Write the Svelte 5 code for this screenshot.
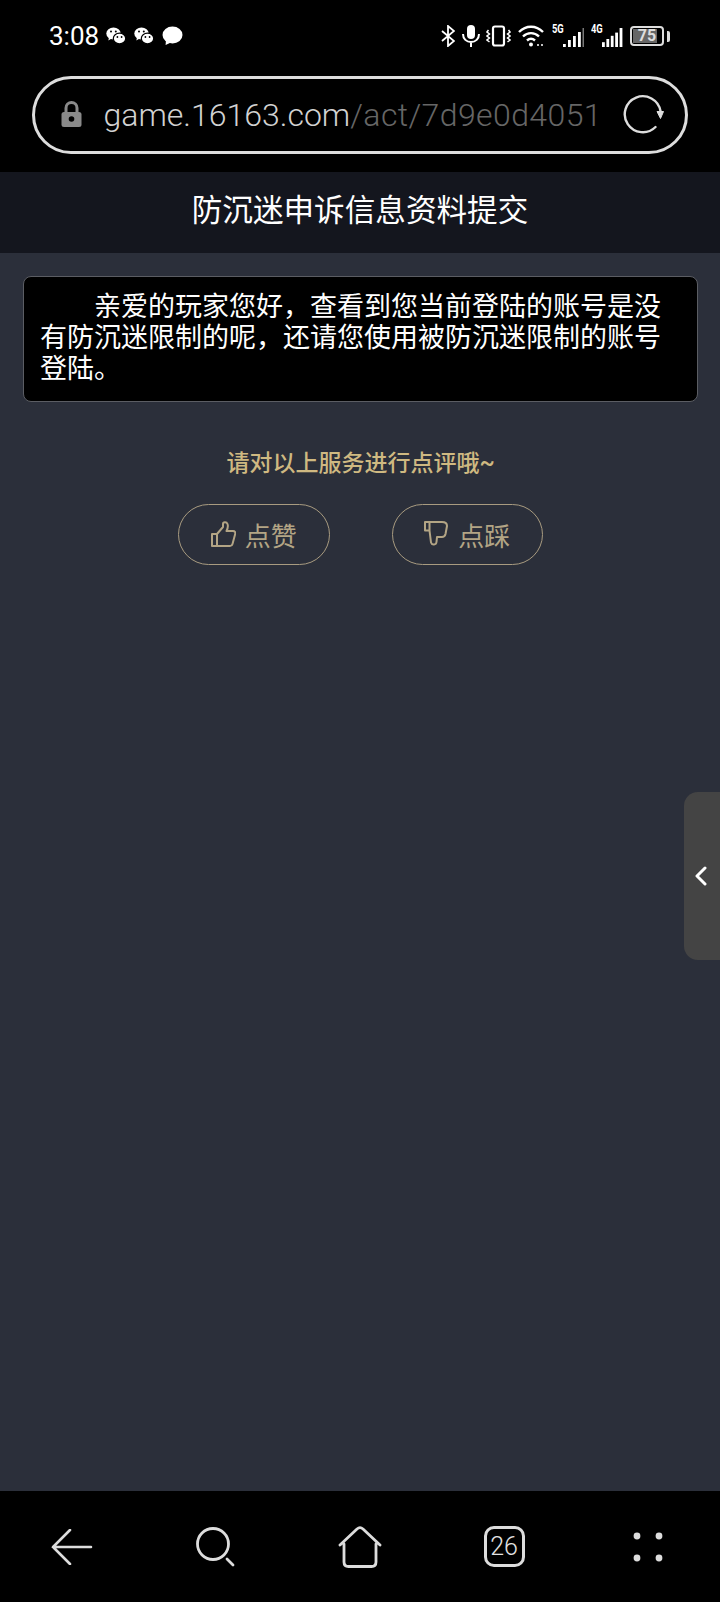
<script>
  const barsFive = [6, 10, 14, 18, 24];
  const navDots = [[4, 4], [26, 4], [4, 26], [26, 26]];
</script>

<div class="page">
  <div class="top">
    <div class="status">
      <div class="status-left">
        <span class="time">3:08</span>
        {#each [0, 1] as i}
          <svg class="wechat" width="20" height="18" viewBox="0 0 20 18">
            <ellipse cx="7.5" cy="6.5" rx="7.2" ry="6" fill="#fff" />
            <path d="M3 10l-.6 3.4L6.5 11z" fill="#fff" />
            <ellipse cx="13.5" cy="11.5" rx="6.2" ry="5.4" fill="#fff" stroke="#000" stroke-width="1.2" />
            <circle cx="5" cy="4.6" r="1" fill="#000" />
            <circle cx="9.8" cy="4.6" r="1" fill="#000" />
            <circle cx="11.4" cy="10" r=".9" fill="#000" />
            <circle cx="15.6" cy="10" r=".9" fill="#000" />
          </svg>
        {/each}
        <svg width="21" height="20" viewBox="0 0 21 20">
          <ellipse cx="10.5" cy="9" rx="10" ry="8.4" fill="#fff" />
          <path d="M4 14l-.4 5L10 16z" fill="#fff" />
        </svg>
      </div>
      <div class="status-right">
        <svg width="14" height="22" viewBox="0 0 14 22" fill="none" stroke="#fff" stroke-width="1.8">
          <path d="M1 6l12 10-6 5V1l6 5L1 16" />
        </svg>
        <svg width="18" height="22" viewBox="0 0 18 22" fill="none" stroke="#fff" stroke-width="2">
          <rect x="5" y="0" width="8" height="14" rx="4" fill="#fff" stroke="none" />
          <path d="M1 9c0 5 3.5 8 8 8s8-3 8-8M9 17v5" />
        </svg>
        <svg class="vibrate" width="25" height="22" viewBox="0 0 25 22" fill="none" stroke="#fff">
          <rect x="7" y="1.500" width="11" height="19" rx="2" stroke-width="2.200" />
          <path d="M2.500 5L1 7l2.500 2L1 11l2.500 2L1 15l2.500 2M22.500 5L24 7l-2.500 2L24 11l-2.500 2L24 15l-2.500 2" stroke-width="1.500" />
        </svg>
        <svg width="27" height="22" viewBox="0 0 27 22" fill="none" stroke="#fff" stroke-width="2.400">
          <path d="M1 7c7-7 17-7 24 0M5 11.500c4.600-4.500 11.400-4.500 16 0M9 15.500c2.500-2.300 5.500-2.300 8 0" />
          <circle cx="13" cy="19.500" r="2" fill="#fff" stroke="none" />
          <path d="M19 20h2M23 20h2" stroke-width="1.400" />
        </svg>
        <div class="signal">
          <span class="net">5G</span>
          <svg width="21" height="20" viewBox="0 0 21 20" fill="#fff">
            <rect x="0" y="16" width="2.800" height="3" />
            <rect x="5" y="12" width="2.800" height="7" />
            <rect x="10" y="8" width="2.800" height="11" />
            <rect x="15" y="4" width="2.800" height="15" />
            <rect x="19.500" y="0" width="1.500" height="19" fill="#777" />
          </svg>
        </div>
        <div class="signal">
          <span class="net">4G</span>
          <svg width="21" height="20" viewBox="0 0 21 20" fill="#fff">
            {#each barsFive as h, i}
              <rect x={i * 4.4} y={19 - h * 0.8} width="2.800" height={h * 0.8} />
            {/each}
          </svg>
        </div>
        <div class="battery">
          <div class="cell"><span class="level">75</span></div>
          <span class="nub"></span>
        </div>
      </div>
    </div>

    <div class="url-bar">
      <svg class="lock" width="21" height="26" viewBox="0 0 21 26">
        <path d="M5 12V7a5.500 5.500 0 0 1 11 0v5" fill="none" stroke="#8a8a8a" stroke-width="3" />
        <rect x="0.500" y="11" width="20" height="15" rx="2.500" fill="#8a8a8a" />
        <circle cx="10.500" cy="18" r="2.800" fill="#000" />
      </svg>
      <div class="url"><span class="host">game.16163.com</span><span class="path">/act/7d9e0d4051</span></div>
      <svg class="reload" width="42" height="42" viewBox="0 0 42 42" fill="none" stroke="#ddd" stroke-width="2.400">
        <path d="M33.500 33A18 18 0 1 1 38.500 17" stroke-linecap="round" />
        <path d="M35 17.500h6.500L38.500 24.500z" fill="#ddd" stroke-width="1" />
      </svg>
    </div>
  </div>

  <header class="title-bar">防沉迷申诉信息资料提交</header>

  <main class="content">
    <div class="notice">
      亲爱的玩家您好，查看到您当前登陆的账号是没有防沉迷限制的呢，还请您使用被防沉迷限制的账号登陆。
    </div>

    <p class="prompt">请对以上服务进行点评哦~</p>

    <div class="votes">
      <button class="vote">
        <svg width="25" height="26" viewBox="0 0 25 26" fill="none" stroke="#b3a585" stroke-width="2" stroke-linejoin="round">
          <path d="M1 13h5v12H1zM6 13l6-7V3c0-2 3.500-2.500 4.500 0 .7 1.800 0 5-1 7h6.500c2 0 2.700 1.500 2.200 3l-2.700 10c-.4 1.400-1.300 2-2.500 2H6" />
        </svg>
        <span>点赞</span>
      </button>
      <button class="vote">
        <svg width="25" height="26" viewBox="0 0 25 26" fill="none" stroke="#b3a585" stroke-width="2" stroke-linejoin="round">
          <path d="M1 1h17c3 0 5 1.500 5 4l-1.500 8c-.5 2-1.500 3-3.500 3h-5l-.5 5c-.3 3-4.500 3.500-5.500.5L5.500 9.500H1zM5.500 1v8.500" />
        </svg>
        <span>点踩</span>
      </button>
    </div>

    <div class="side-tab">
      <svg width="14" height="20" viewBox="0 0 14 20" fill="none" stroke="#fff" stroke-width="3" stroke-linecap="round" stroke-linejoin="round">
        <path d="M11 2L3 10l8 8" />
      </svg>
    </div>
  </main>

  <nav class="bottom-nav">
    <svg width="42" height="36" viewBox="0 0 42 36" fill="none" stroke="#ddd" stroke-width="2.600" stroke-linecap="round">
      <path d="M2 18h38M19 1L2 18l17 17" />
    </svg>
    <svg width="40" height="40" viewBox="0 0 40 40" fill="none" stroke="#ddd" stroke-width="2.800" stroke-linecap="round">
      <circle cx="17" cy="17" r="15.500" />
      <path d="M31 32l6 6" />
    </svg>
    <svg width="44" height="42" viewBox="0 0 44 42" fill="none" stroke="#ddd" stroke-width="2.800" stroke-linecap="round" stroke-linejoin="round">
      <path d="M2 19L19 3c2-1.800 4-1.800 6 0l17 16M6 18v18c0 3 1.500 4.500 4.500 4.500h23c3 0 4.500-1.500 4.500-4.500V18" />
    </svg>
    <div class="tabs">26</div>
    <svg width="30" height="30" viewBox="0 0 30 30" fill="#ddd">
      {#each navDots as [cx, cy]}
        <circle {cx} {cy} r="3.400" />
      {/each}
    </svg>
  </nav>
</div>

<style>
  :global(body) {
    margin: 0;
    background: #000;
  }

  .page {
    display: flex;
    flex-direction: column;
    height: 1602px;
    font-family: "Roboto", "Noto Sans CJK SC", sans-serif;
    color: #fff;
    overflow: hidden;
  }

  .top {
    height: 172px;
    box-sizing: border-box;
    background: #000;
    padding-top: 20px;
  }

  .status {
    display: flex;
    justify-content: space-between;
    align-items: center;
    height: 32px;
    padding: 0 50px 0 49px;
  }

  .status-left,
  .status-right {
    display: flex;
    align-items: center;
  }

  .status-left {
    gap: 8px;
  }

  .status-right {
    gap: 7px;
  }

  .time {
    font-size: 26px;
    font-weight: 400;
    width: 49px;
    white-space: nowrap;
  }

  .vibrate {
    margin-left: -1px;
  }

  .signal {
    position: relative;
    width: 32px;
    height: 24px;
    display: flex;
    justify-content: flex-end;
    align-items: flex-end;
  }

  .net {
    position: absolute;
    left: 0;
    top: -2px;
    font-size: 12px;
    font-weight: 700;
    transform: scaleX(0.78);
    transform-origin: left;
  }

  .battery {
    display: flex;
    align-items: center;
    gap: 1px;
  }

  .cell {
    width: 34px;
    height: 20px;
    box-sizing: border-box;
    border: 2px solid #ddd;
    border-radius: 4px;
    padding: 1px;
    background: linear-gradient(#666, #666) no-repeat 1px 1px / 24px 14px;
    display: flex;
    align-items: center;
    justify-content: center;
  }

  .level {
    font-size: 16px;
    font-weight: 700;
    line-height: 1;
    color: #ddd;
  }

  .nub {
    width: 3px;
    height: 11px;
    margin-left: 2px;
    border-radius: 0 2px 2px 0;
    background: #ddd;
  }

  .url-bar {
    display: flex;
    align-items: center;
    height: 78px;
    box-sizing: border-box;
    margin: 24px 32px 0 31.500px;
    padding: 0 21px 0 26px;
    border: 3px solid #ddd;
    border-radius: 39px;
  }

  .lock {
    flex: none;
    margin-bottom: 3px;
  }

  .url {
    flex: 1;
    margin-left: 22px;
    font-family: "Roboto", "Noto Sans", sans-serif;
    font-size: 32px;
    font-weight: 300;
    white-space: nowrap;
    overflow: hidden;
  }

  .host {
    color: #d2d2d2;
  }

  .path {
    color: #666;
    letter-spacing: 0.4px;
  }

  .reload {
    flex: none;
  }

  .title-bar {
    height: 81px;
    line-height: 77px;
    text-align: center;
    flex: none;
    background: #14161e;
    font-size: 30.600px;
  }

  .content {
    position: relative;
    flex: 1;
    background: #2b2f3a;
    padding: 23px 22px 0 23px;
  }

  .notice {
    background: #000;
    border: 1px solid #5b5d63;
    border-radius: 8px;
    padding: 15px 16px 15.500px;
    font-size: 27px;
    line-height: 31px;
    text-indent: 2em;
  }

  .prompt {
    margin: 46px 0 0;
    text-align: center;
    font-size: 23px;
    line-height: 32px;
    font-weight: 500;
    color: #cfb981;
  }

  .votes {
    display: flex;
    justify-content: center;
    gap: 62px;
    margin-top: 24px;
  }

  .vote {
    display: flex;
    align-items: center;
    justify-content: center;
    gap: 9px;
    width: 151.500px;
    height: 61px;
    padding: 0;
    background: none;
    border: 1px solid #a89b80;
    border-radius: 31px;
    color: #b3a585;
    font-family: inherit;
    font-size: 26px;
  }

  .side-tab {
    position: absolute;
    right: 0;
    top: 539px;
    width: 36px;
    height: 168px;
    padding-right: 2px;
    box-sizing: border-box;
    display: flex;
    align-items: center;
    justify-content: center;
    background: #444;
    border-radius: 14px 0 0 14px;
  }

  .bottom-nav {
    display: grid;
    grid-template-columns: repeat(5, 1fr);
    justify-items: center;
    align-items: center;
    flex: none;
    height: 111px;
    background: #000;
  }

  .tabs {
    width: 41px;
    height: 41px;
    box-sizing: border-box;
    border: 3px solid #ddd;
    border-radius: 10px;
    display: flex;
    align-items: center;
    justify-content: center;
    font-size: 25px;
    font-weight: 300;
    color: #e2e2e2;
  }
</style>
